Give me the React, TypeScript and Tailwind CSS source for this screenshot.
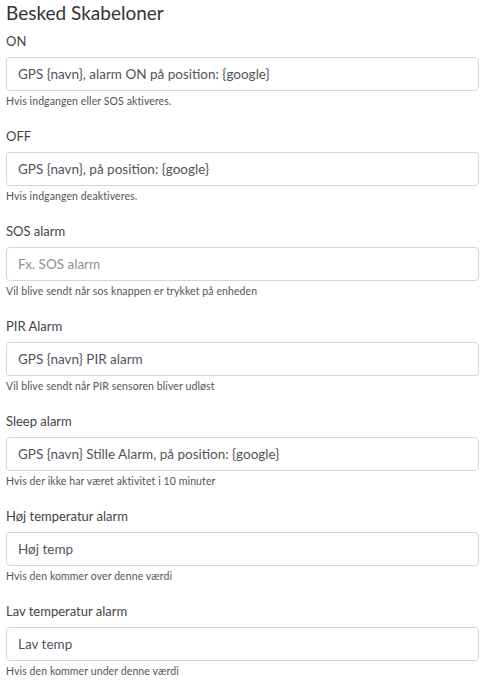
const fields = [
  {
    label: "ON",
    value: "GPS {navn}, alarm ON på position: {google}",
    help: "Hvis indgangen eller SOS aktiveres.",
  },
  {
    label: "OFF",
    value: "GPS {navn}, på position: {google}",
    help: "Hvis indgangen deaktiveres.",
  },
  {
    label: "SOS alarm",
    placeholder: "Fx. SOS alarm",
    help: "Vil blive sendt når sos knappen er trykket på enheden",
  },
  {
    label: "PIR Alarm",
    value: "GPS {navn} PIR alarm",
    help: "Vil blive sendt når PIR sensoren bliver udløst",
  },
  {
    label: "Sleep alarm",
    value: "GPS {navn} Stille Alarm, på position: {google}",
    help: "Hvis der ikke har været aktivitet i 10 minuter",
  },
  {
    label: "Høj temperatur alarm",
    value: "Høj temp",
    help: "Hvis den kommer over denne værdi",
  },
  {
    label: "Lav temperatur alarm",
    value: "Lav temp",
    help: "Hvis den kommer under denne værdi",
  },
];

export default function App() {
  return (
    <div className="bg-white min-h-screen px-[6px] pr-[13px] font-['Lato',sans-serif] text-[#3a3a3a]">
      <h2 className="text-[19px] leading-[24px] pt-[1px] mb-[6px] font-normal text-[#333]">
        Besked Skabeloner
      </h2>
      {fields.map((f) => (
        <div key={f.label} className="mb-[18px]">
          <label className="block text-[13px] leading-[20px] mb-[6px] text-[#444]">
            {f.label}
          </label>
          <input
            type="text"
            defaultValue={f.value}
            placeholder={f.placeholder}
            className="block w-full h-[34px] rounded-[4px] border border-[#d6d6d6] px-[11px] text-[13.5px] text-[#4f555b] placeholder:text-[#8d9297] outline-none"
          />
          <div className="mt-[3px] text-[10.5px] leading-[14px] tracking-[0.1px] text-[#555]">
            {f.help}
          </div>
        </div>
      ))}
    </div>
  );
}
